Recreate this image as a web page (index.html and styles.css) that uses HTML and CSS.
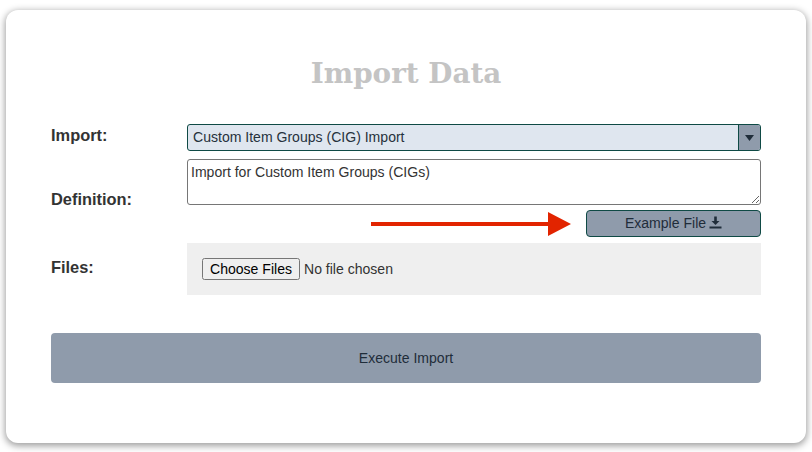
FILE: index.html
```html
<!DOCTYPE html>
<html lang="en">
<head>
<meta charset="utf-8">
<title>Import Data</title>
<link rel="stylesheet" href="styles.css">
</head>
<body>
<main class="card">
  <h1 class="title">Import Data</h1>
  <form class="form">
    <div class="row row-import">
      <label class="label label-import">Import:</label>
      <div class="select">
        <span class="select-value">Custom Item Groups (CIG) Import</span>
        <span class="select-arrow"><svg width="9" height="6" viewBox="0 0 9 6"><path d="M0 0H9L4.500 6Z" fill="#1f2d3a"/></svg></span>
      </div>
    </div>
    <div class="row row-definition">
      <label class="label label-definition">Definition:</label>
      <div class="definition-field">
        <textarea class="textarea" readonly>Import for Custom Item Groups (CIGs)</textarea>
        <div class="example-row">
          <svg class="arrow" width="200" height="24" viewBox="0 0 200 24"><path d="M0 10H177V0L200 12L177 24V14H0Z" fill="#e22400"/></svg>
          <button type="button" class="example-btn"><span class="example-text">Example File</span>
            <svg class="download" width="13" height="13" viewBox="0 0 13 13"><path d="M5.200 0.500H7.800V5H10.500L6.500 9L2.500 5H5.200ZM0.500 10.500H12.500V12.500H0.500Z" fill="#1f2d3a"/></svg>
          </button>
        </div>
      </div>
    </div>
    <div class="row row-files">
      <label class="label label-files">Files:</label>
      <div class="files"><input class="file-input" type="file" multiple></div>
    </div>
    <button type="button" class="execute">Execute Import</button>
  </form>
</main>
</body>
</html>
```

FILE: styles.css
```css
* { box-sizing: border-box; }
html, body { margin: 0; height: 100%; background: #fff; }
body {
  padding: 10px 6px 9px;
  font-family: "Liberation Sans", Arial, sans-serif;
  font-size: 14.06px;
  color: #2b2b2b;
  overflow: hidden;
}
.card {
  height: 433px;
  background: #fff;
  border-radius: 12px;
  box-shadow: 0 2px 7px 1px rgba(0,0,0,.38);
  padding: 45px 45px 0;
}
.title {
  margin: 0;
  height: 38px;
  line-height: 38px;
  text-align: center;
  font-family: "DejaVu Serif", serif;
  font-weight: 700;
  font-size: 27.8px;
  color: #c4c4c4;
}
.form { margin-top: 31px; display: flex; flex-direction: column; }
.row { display: grid; grid-template-columns: 136px 1fr; align-items: center; }
.label { font-weight: 700; font-size: 16.4px; color: #333; }
.label-import { margin-bottom: 4px; }
.label-files { margin-bottom: 4px; }
.select {
  height: 27px;
  display: flex;
  background: #dfe6ef;
  border: 1px solid #0f4a45;
  border-radius: 3px;
  overflow: hidden;
}
.select-value { flex: 1; padding-left: 5px; line-height: 25px; color: #26323c; }
.select-arrow {
  width: 22px;
  background: #8f9bab;
  border-left: 1px solid #0f4a45;
  display: flex;
  align-items: center;
  justify-content: center;
}
.row-definition { margin-top: 8px; }
.label-definition { align-self: start; margin-top: 31px; }
.definition-field { display: flex; flex-direction: column; }
.textarea {
  display: block;
  width: 100%;
  height: 46px;
  padding: 4px 3px;
  border: 1px solid #767676;
  border-radius: 3px;
  font-family: inherit;
  font-size: inherit;
  line-height: 16px;
  color: #333;
  outline: none;
}
.example-row { margin-top: 5px; display: flex; align-items: center; justify-content: flex-end; gap: 15px; }
.arrow { display: block; }
.example-btn {
  width: 175px;
  height: 27px;
  padding: 0 0 2px;
  display: flex;
  align-items: center;
  justify-content: center;
  gap: 3px;
  background: #8f9bab;
  border: 1px solid #0f4a45;
  border-radius: 4px;
  font-family: inherit;
  font-size: inherit;
  color: #1f2d3a;
}
.row-files { margin-top: 6px; }
.files { height: 52px; background: #efefef; padding-left: 15px; display: flex; align-items: center; }
.file-input { font-family: inherit; font-size: inherit; color: #333; width: 280px; }
.execute {
  margin-top: 38px;
  height: 50px;
  background: #8f9bab;
  border: 0;
  border-radius: 4px;
  font-family: inherit;
  font-size: inherit;
  color: #1f2d3a;
}
```
